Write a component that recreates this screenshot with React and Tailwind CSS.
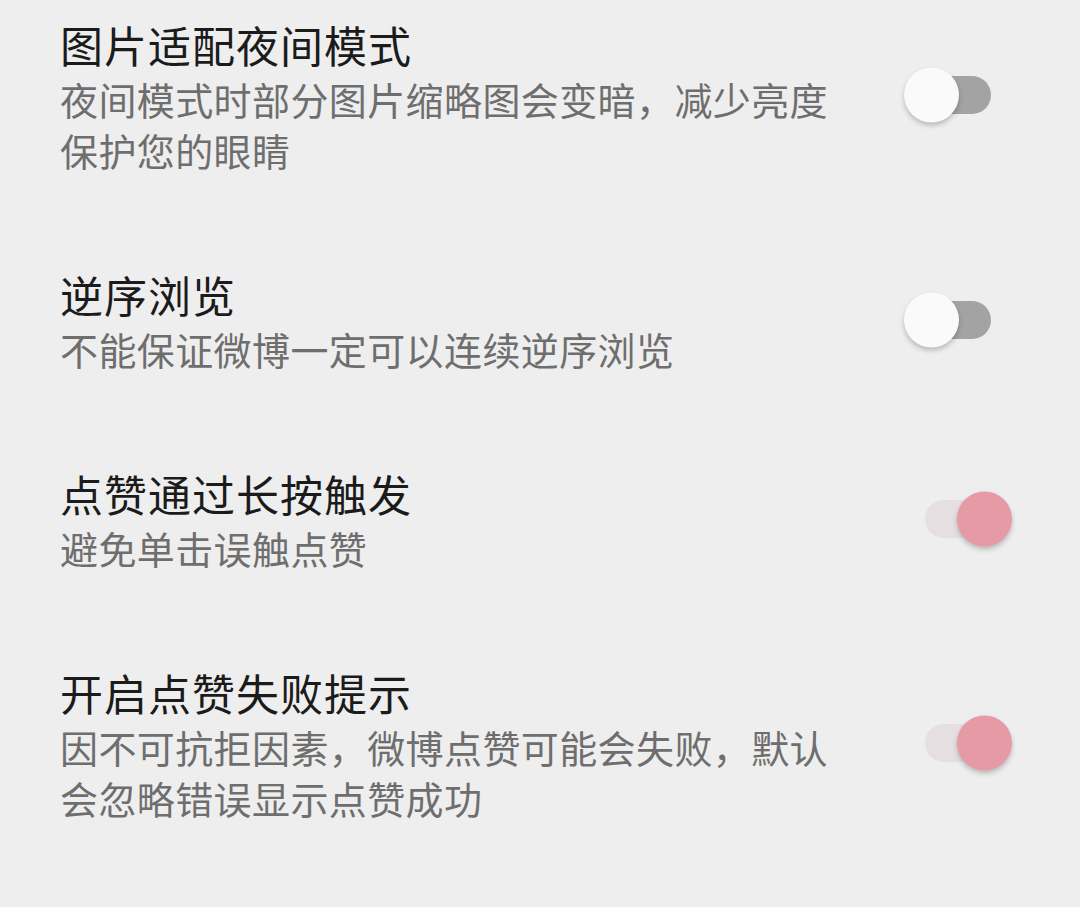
import React, { useState } from "react";

const settings = [
  {
    title: "图片适配夜间模式",
    desc: "夜间模式时部分图片缩略图会变暗，减少亮度保护您的眼睛",
    on: false,
  },
  {
    title: "逆序浏览",
    desc: "不能保证微博一定可以连续逆序浏览",
    on: false,
  },
  {
    title: "点赞通过长按触发",
    desc: "避免单击误触点赞",
    on: true,
  },
  {
    title: "开启点赞失败提示",
    desc: "因不可抗拒因素，微博点赞可能会失败，默认会忽略错误显示点赞成功",
    on: true,
  },
];

const Toggle = ({ on, onClick }) => (
  <button
    onClick={onClick}
    className={`relative w-[66px] h-[38px] rounded-full ${on ? "bg-[#e6dfe1]" : "bg-[#a3a3a3]"}`}
  >
    <span
      className={`absolute top-1/2 -translate-y-1/2 w-[55px] h-[55px] rounded-full shadow-[0_3px_5px_rgba(0,0,0,0.22)] ${
        on ? "left-[32px] bg-[#e69aa6]" : "left-[-21px] bg-[#fafafa]"
      }`}
    />
  </button>
);

const App = () => {
  const [items, setItems] = useState(settings);

  const flip = (i) => {
    setItems(items.map((it, idx) => (idx === i ? { ...it, on: !it.on } : it)));
  };

  return (
    <div
      className="min-h-screen bg-[#eeeeee] pt-[15px] pl-[60px] pr-[89px] flex flex-col gap-[90px]"
      style={{ fontFamily: '"Noto Sans CJK SC", "Noto Sans", sans-serif' }}
    >
      {items.map((it, i) => (
        <div key={it.title} className="flex items-center justify-between">
          <div className="w-[785px]">
            <div className="text-[43px] leading-[58px] tracking-[1px] text-[#1b1b1b]">{it.title}</div>
            <div className="text-[38px] leading-[51px] tracking-[0.4px] text-[#6e6e6e]">{it.desc}</div>
          </div>
          <Toggle on={it.on} onClick={() => flip(i)} />
        </div>
      ))}
    </div>
  );
};

export default App;
